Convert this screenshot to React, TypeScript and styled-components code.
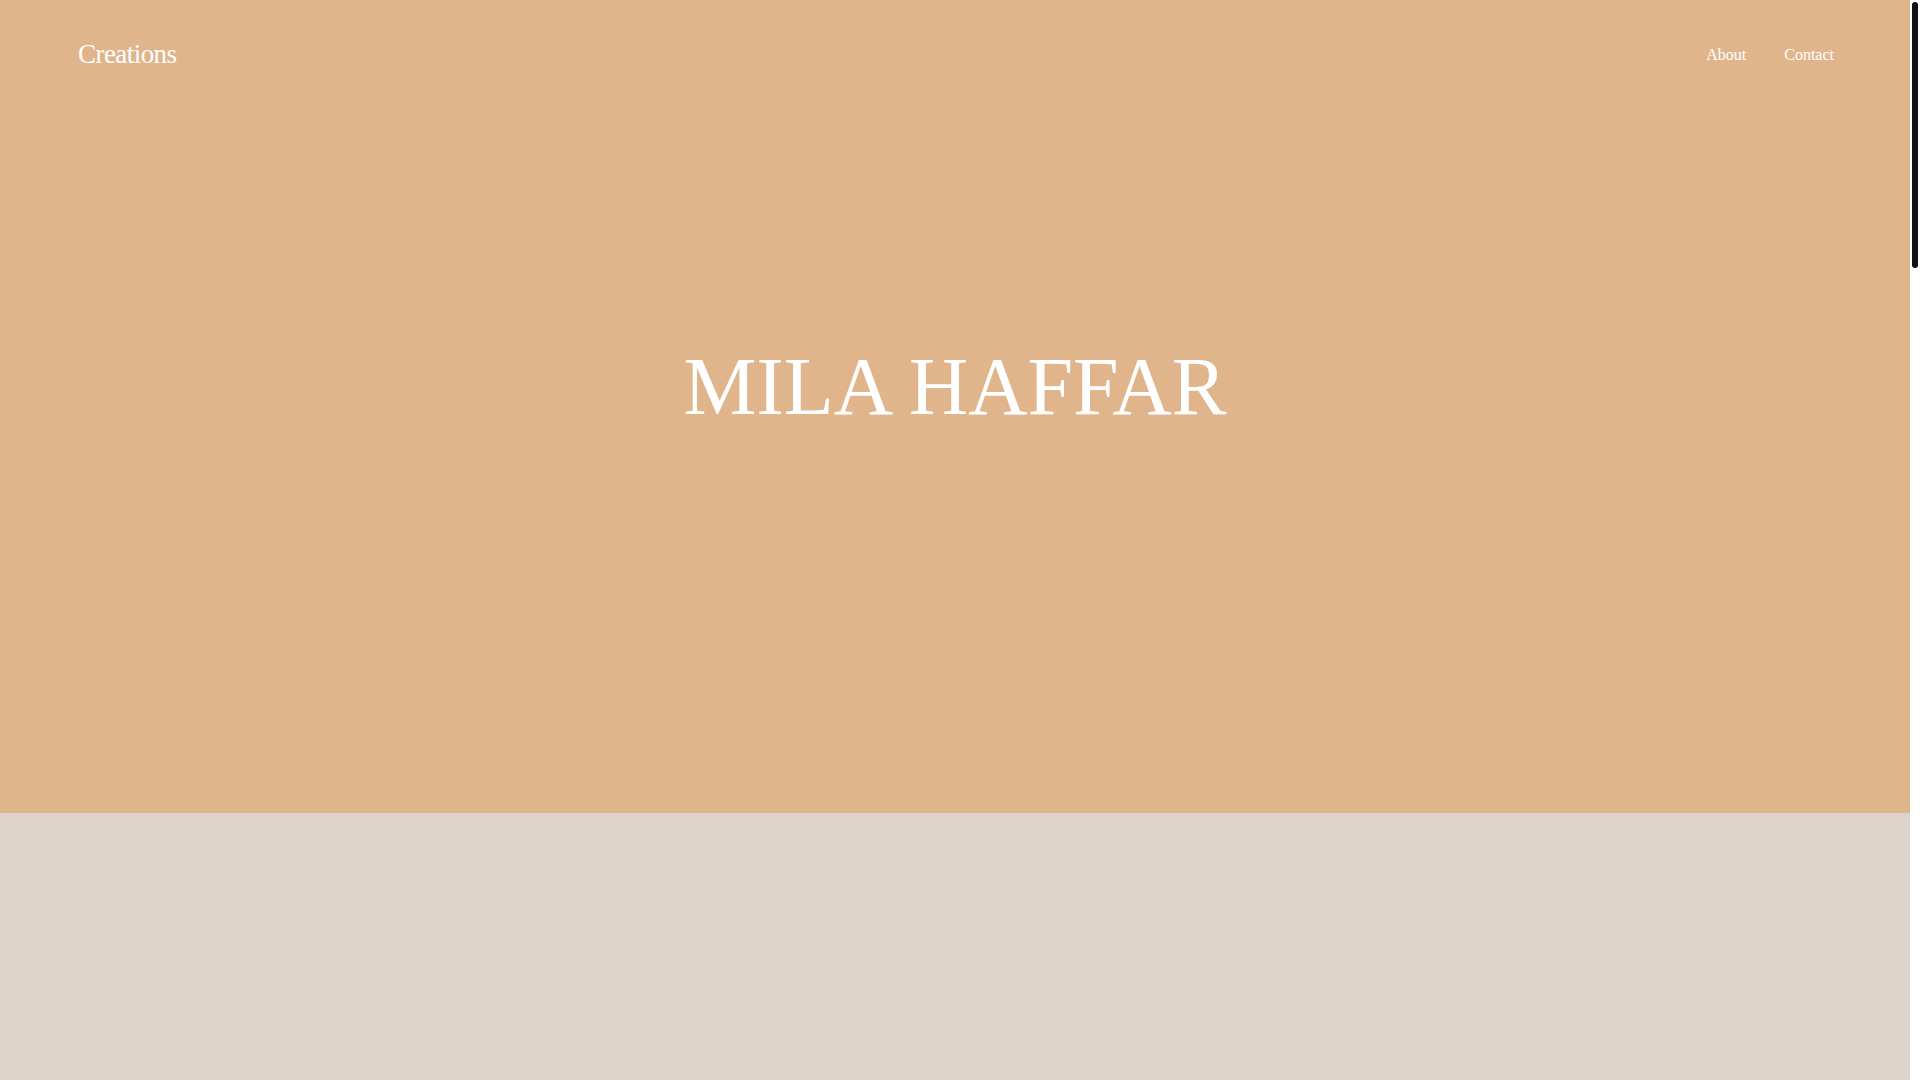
import styled, { createGlobalStyle } from "styled-components";

const GlobalStyle = createGlobalStyle`
  html, body {
    margin: 0;
    padding: 0;
    background: #fff;
  }
  body {
    font-family: "Liberation Serif", "Times New Roman", serif;
    color: #fff;
  }
`;

// the page keeps a 10px gutter for its own slim scroll rail
const Shell = styled.div`
  margin-right: 10px;
`;

const ScrollRail = styled.div`
  position: fixed;
  top: 0;
  right: 0;
  width: 10px;
  height: 100vh;
  background: #fff;
`;

const ScrollThumb = styled.div`
  margin: 2px 2px 0 2px;
  height: 266px;
  border-radius: 4px;
  background: #111;
`;

const Hero = styled.section`
  background: #e1b58c;
  min-height: 813px;
  box-sizing: border-box;
  display: flex;
  flex-direction: column;
`;

const Header = styled.header`
  display: flex;
  align-items: center;
  justify-content: space-between;
  padding: 39px 76px 39px 78px;
`;

const Brand = styled.a`
  font-size: 27px;
  letter-spacing: -0.55px;
  color: #fff;
  text-decoration: none;
`;

const Nav = styled.nav`
  display: flex;
  gap: 38px;
`;

const NavLink = styled.a`
  font-size: 16px;
  color: #fff;
  text-decoration: none;
`;

const Title = styled.h1`
  margin: 231px 0 0;
  text-align: center;
  font-weight: 400;
  font-size: 82px;
  line-height: normal;
`;

const Works = styled.section`
  height: 3507px;
  background: #ded3c8;
`;

export default function App() {
  return (
    <>
      <GlobalStyle />
      <Shell>
        <Hero>
          <Header>
            <Brand href="#">Creations</Brand>
            <Nav>
              <NavLink href="#">About</NavLink>
              <NavLink href="#">Contact</NavLink>
            </Nav>
          </Header>
          <Title>MILA HAFFAR</Title>
        </Hero>
        <Works />
      </Shell>
      <ScrollRail>
        <ScrollThumb />
      </ScrollRail>
    </>
  );
}
